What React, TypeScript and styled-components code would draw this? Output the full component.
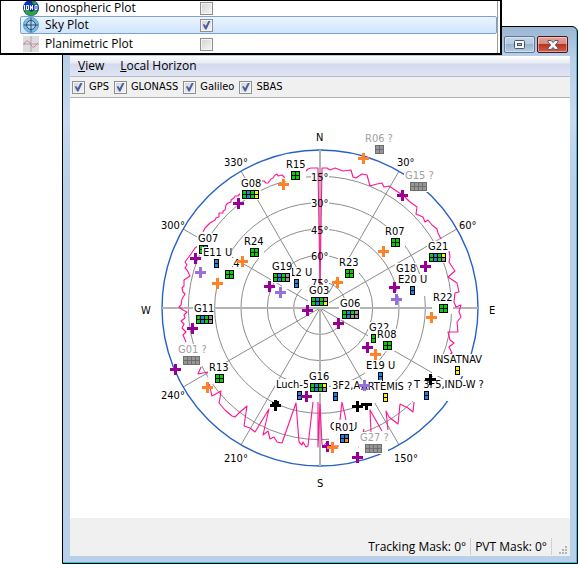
import React from 'react';
import styled, { createGlobalStyle } from 'styled-components';

const UI_FONT = '"Open Sans", "Noto Sans", sans-serif';
const PLOT_FONT = '"DejaVu Sans Condensed", "DejaVu Sans", sans-serif';

const GlobalStyle = createGlobalStyle`
  * { box-sizing: border-box; }
  body { margin: 0; background: #fff; color: #000; font: 12px/18px ${UI_FONT}; }
`;

const Desktop = styled.main`
  position: relative;
  display: flex;
  flex-direction: column;
  min-height: 100vh;
  padding: 26px 1px 1px 62px;
`;

const WindowFrame = styled.section`
  flex: 1;
  display: flex;
  flex-direction: column;
  padding: 0 7px 7px;
  border: 1px solid #000;
  border-radius: 0 6px 0 0;
  background: linear-gradient(#9bb6d2, #b8cfe8 30px, #c6daf0 90px, #b8d0ea 160px, #b8d0ea);
  box-shadow: inset -1px -1px 0 #1ec8e6;
`;

const TitleBar = styled.header`
  display: flex;
  justify-content: flex-end;
  align-items: flex-start;
  gap: 2px;
  height: 29px;
  padding: 9px 2px 0 0;
`;

const CaptionButton = styled.button<{ $danger?: boolean }>`
  display: grid;
  place-items: center;
  width: 31px;
  height: 17px;
  padding: 0;
  border: 1px solid ${p => (p.$danger ? '#4c1420' : '#5f7590')};
  border-radius: 2px;
  background: ${p =>
    p.$danger
      ? 'linear-gradient(#e3a39a, #d98a7e 46%, #b9331f 50%, #d0604a)'
      : 'linear-gradient(#c3d6ea, #b4cae2 46%, #98b3d0 50%, #b5cce5)'};
  box-shadow: inset 0 0 0 1px rgba(255, 255, 255, 0.4);
`;

const MenuBar = styled.nav`
  display: flex;
  height: 21px;
  border-bottom: 1px solid #b6bccb;
  background: linear-gradient(#fff, #e8ebf5 7px, #d4daed 8px, #e0e5f3);
`;

const MenuItem = styled.button`
  padding: 0 8px;
  border: 0;
  background: none;
  color: #000;
  font: 12px/20px ${UI_FONT};
`;

const Toolbar = styled.div`
  display: flex;
  align-items: center;
  gap: 5px;
  height: 21px;
  padding-left: 2px;
  border-bottom: 1px solid #b0b0b0;
  background: #f0f0f0;
`;

const Check = styled.input`
  appearance: none;
  flex: none;
  width: 13px;
  height: 13px;
  margin: 0;
  border: 1px solid #8e8f8f;
  background: linear-gradient(135deg, #cfd2d6, #f6f6f6);
  box-shadow: inset 0 0 0 1px #f4f4f4;

  &:checked::after {
    content: '';
    display: block;
    width: 9px;
    height: 9px;
    margin: 1px;
    background: #4a5f9b;
    clip-path: polygon(8% 48%, 24% 38%, 42% 60%, 74% 0, 96% 0, 50% 100%, 36% 100%);
  }
`;

const FilterLabel = styled.label`
  display: flex;
  align-items: center;
  gap: 4px;
  font: 11px/18px ${PLOT_FONT};
`;

const PlotArea = styled.div`
  flex: 1;
  display: flex;
  justify-content: center;
  background: #fff;
`;

const Chart = styled.svg`
  display: block;
  font: 11px ${PLOT_FONT};
`;

const StatusBar = styled.footer`
  display: flex;
  justify-content: flex-end;
  align-items: flex-end;
  height: 38px;
  padding: 0 2px 1px 0;
  background: #f0f0f0;
`;

const StatusCell = styled.span`
  height: 17px;
  padding: 0 4px;
  border-right: 1px solid #d0d0d0;
  line-height: 18px;
`;

const Grip = styled.svg`
  margin-left: 7px;
`;

const ViewList = styled.ul`
  position: absolute;
  top: 0;
  left: 0;
  right: 77px;
  height: 55px;
  margin: 0;
  padding: 0 1px 0 19px;
  overflow: hidden;
  display: flex;
  flex-direction: column;
  border: solid #000;
  border-width: 1px 2px 2px 1px;
  background: #fff;
  box-shadow: inset -2px 0 0 #fff, inset -3px 0 0 #9a9a9a;
  list-style: none;
`;

const ViewRow = styled.li<{ $selected?: boolean; $clipped?: boolean }>`
  display: flex;
  align-items: center;
  height: 18px;
  flex: none;
  margin: ${p => (p.$clipped ? '-3px' : '0')} 2px 0 0;
  padding: ${p => (p.$selected ? '0' : '2px')} 0 0 2px;
  border: 1px solid ${p => (p.$selected ? '#7da2ce' : 'transparent')};
  border-radius: 2px;
  background: ${p => (p.$selected ? 'linear-gradient(#ebf4fe, #cfe4fe)' : 'none')};
`;

const ViewName = styled.label`
  display: flex;
  align-items: center;
  gap: 6px;
  width: 177px;
`;

const CX = 320;
const CY = 308;
const R = 158;

type Sat = {
  name: string;
  x: number;
  w: number;
  icon: [number, number];
  cells: string;
  muted?: boolean;
};

const FILL: Record<string, string> = {
  g: '#00d200',
  b: '#1e82e6',
  y: '#fff000',
  s: '#969696',
  o: '#ff8228',
};

// Each pair of letters in `cells` is one column: top colour, bottom colour.
const SATS: Sat[] = [
  { name: 'R06 ?', x: 365, w: 28, icon: [375, 145], cells: 'ssss', muted: true },
  { name: 'G15 ?', x: 405, w: 28, icon: [410, 182], cells: 'ssssssss', muted: true },
  { name: 'G01 ?', x: 178, w: 28, icon: [183, 356], cells: 'ssssssss', muted: true },
  { name: 'G27 ?', x: 360, w: 28, icon: [365, 444], cells: 'ssssssss', muted: true },
  { name: 'R15', x: 286, w: 20, icon: [291, 171], cells: 'gggg' },
  { name: 'G08', x: 241, w: 20, icon: [242, 190], cells: 'ggbbggyy' },
  { name: 'G07', x: 198, w: 20, icon: [199, 245], cells: 'ggbb' },
  { name: 'R14', x: 220, w: 20, icon: [225, 270], cells: 'gggg' },
  { name: 'E11 U', x: 203, w: 29, icon: [214, 259], cells: 'bb' },
  { name: 'R24', x: 244, w: 20, icon: [250, 248], cells: 'gggg' },
  { name: 'E12 U', x: 283, w: 29, icon: [294, 279], cells: 'bb' },
  { name: 'G19', x: 272, w: 20, icon: [273, 273], cells: 'ggbbggss' },
  { name: 'R23', x: 339, w: 20, icon: [345, 269], cells: 'gggg' },
  { name: 'G03', x: 309, w: 20, icon: [311, 297], cells: 'ggbbggsy' },
  { name: 'G06', x: 340, w: 20, icon: [342, 310], cells: 'ggbbgsss' },
  { name: 'G11', x: 194, w: 20, icon: [196, 315], cells: 'ggbbggss' },
  { name: 'R07', x: 385, w: 20, icon: [391, 238], cells: 'gggg' },
  { name: 'G21', x: 428, w: 20, icon: [429, 253], cells: 'ggbbggys' },
  { name: 'G18', x: 396, w: 20, icon: [398, 275], cells: 'ggbb' },
  { name: 'E20 U', x: 398, w: 29, icon: [410, 286], cells: 'bb' },
  { name: 'R22', x: 433, w: 20, icon: [439, 304], cells: 'gggg' },
  { name: 'G22', x: 369, w: 20, icon: [371, 334], cells: 'ggbb' },
  { name: 'R08', x: 377, w: 20, icon: [383, 341], cells: 'gggg' },
  { name: 'R13', x: 209, w: 20, icon: [215, 374], cells: 'gggg' },
  { name: 'E19 U', x: 366, w: 29, icon: [378, 372], cells: 'bb' },
  { name: 'Luch-5A', x: 276, w: 40, icon: [297, 391], cells: 'bb' },
  { name: '3F2,AOR', x: 332, w: 50, icon: [333, 392], cells: 'bb' },
  { name: 'G16', x: 309, w: 20, icon: [310, 383], cells: 'ggbbggys' },
  { name: 'T 3F5,IND-W ?', x: 414, w: 72, icon: [424, 391], cells: 'bb' },
  { name: 'ARTEMIS ?', x: 361, w: 51, icon: [383, 393], cells: 'yy' },
  { name: 'INSATNAV', x: 433, w: 50, icon: [455, 366], cells: 'yy' },
  { name: 'G', x: 330, w: 10, icon: [340, 433], cells: 'bb' },
  { name: 'U', x: 350, w: 9, icon: [341, 433], cells: 'bb' },
  { name: 'R01', x: 335, w: 19, icon: [340, 434], cells: 'bbbo' },
];

const CROSSES: Record<string, [number, number][]> = {
  '#960096': [
    [238, 203], [195, 258], [269, 286], [307, 310], [192, 328], [402, 195], [425, 266],
    [394, 287], [338, 323], [367, 347], [175, 369], [306, 396], [327, 446], [357, 457],
  ],
  '#ff8228': [
    [363, 158], [283, 184], [383, 251], [337, 282], [242, 261], [217, 283], [431, 317],
    [375, 354], [207, 387], [332, 447],
  ],
  '#9670dc': [[200, 272], [280, 292], [396, 299], [364, 385]],
  '#000': [[275, 405], [430, 379], [357, 406]],
};

const HORIZON = [
  '203,232 205,228 208,225 210,223 215,220 216,218 219,217 219,213 223,213 223,211 225,210 226,205 228,203 231,202 231,200 234,198 235,196 238,196 241,193',
  '262,181 264,181 266,183 268,183 271,179 273,178 275,175 277,174 278,176 282,175 284,177 286,178',
  '306,171 308,169 311,168 318,168 320,284 322,168 327,168 330,170 335,168 343,171 351,170 353,177 356,178 362,174 367,175 370,186 377,184 382,183 384,187 389,186 392,188 398,192 403,195 410,202 417,207 416,214 423,217 425,222 428,220 432,225 437,229 438,233 441,239',
  '198,246 195,248 191,254 188,258 185,262 187,265 185,268 187,270 190,276 187,278 184,280 184,286 182,288 183,292 185,294 182,299 181,305 179,307 183,310 187,312 184,315 185,318 181,321 184,324 182,328 186,332 183,335 186,342',
  '201,367 198,374 208,372 209,377 209,382 211,392 212,396 221,391 220,398 219,403 225,410 232,416 235,417 240,412 247,406 244,426 250,428 255,432 269,409 263,435 268,431 270,439 274,437 277,442 282,443 296,403 299,442 302,445 303,442 306,447 308,446 313,402',
  '318,402 318,447 320,404 322,444 323,447 326,443 328,446 339,446',
  '340,420 342,402 346,420',
  '359,448 364,429',
  '371,432 370,410 382,431',
  '388,430 386,411 389,417 398,424 400,404 408,408 413,412 414,402',
  '449,251 450,257 449,262 455,271 448,277 457,283 459,292 455,293 454,302 456,307 461,305 459,312 461,317 457,322 458,332 448,332 450,340 454,343 449,347 452,353 449,356 452,352',
];

const SPOKES = [30, 60, 120, 150, 210, 240, 300, 330].map(deg => (deg * Math.PI) / 180);
const RINGS = [15, 30, 45, 60, 75];
const BEARINGS: [string, number, number][] = [
  ['N', 316, 141], ['30°', 397, 166], ['60°', 459, 229], ['E', 489, 314],
  ['150°', 394, 462], ['S', 317, 487], ['210°', 224, 462], ['240°', 161, 399],
  ['W', 141, 314], ['300°', 161, 229], ['330°', 224, 166],
];

function Satellite({ name, x, w, icon: [ix, iy], cells, muted }: Sat) {
  const line = muted ? '#6e6e6e' : '#000';
  const columns = cells.length / 2;
  return (
    <g>
      <rect x={x - 1} y={iy - 12} width={w + 1} height={22} fill="#fff" />
      <text x={x} y={iy - 3} fill={muted ? '#a0a0a0' : '#000'}>{name}</text>
      <rect x={ix} y={iy} width={columns * 4 + 1} height={9} fill={line} />
      {cells.split('').map((c, i) => (
        <rect
          key={i}
          x={ix + 1 + Math.floor(i / 2) * 4}
          y={iy + 1 + (i % 2) * 4}
          width={3}
          height={3}
          fill={FILL[c]}
        />
      ))}
    </g>
  );
}

function SkyPlot() {
  return (
    <Chart width="500" height="420" viewBox="70 98 500 420" role="img" aria-label="Sky plot">
      <g fill="none" stroke="#8c8c8c">
        {RINGS.map(el => <circle key={el} cx={CX} cy={CY} r={(R * (90 - el)) / 90} />)}
        {SPOKES.map(a => (
          <line key={a} x1={CX} y1={CY} x2={CX + R * Math.sin(a)} y2={CY - R * Math.cos(a)} />
        ))}
        <circle cx={CX} cy={CY} r={R} stroke="#2860c8" strokeWidth="1.4" />
      </g>
      {RINGS.map((el, i) => (
        <rect key={el} x={311} y={Math.round(172 + i * 26.4)} width={18} height={11} fill="#fff" />
      ))}
      <path d={`M${CX} 150V466M162 ${CY}H478`} stroke="#b4b4b4" strokeWidth="2" />
      <g fill="none" stroke="#ff1493" strokeWidth="1.1" strokeLinejoin="round">
        {HORIZON.map(points => <polyline key={points} points={points} />)}
      </g>
      {RINGS.map((el, i) => (
        <text key={el} x={311} y={Math.round(181 + i * 26.4)}>{el}°</text>
      ))}
      {BEARINGS.map(([name, x, y]) => <text key={name} x={x} y={y}>{name}</text>)}
      {SATS.map(sat => <Satellite key={sat.name} {...sat} />)}
      {Object.entries(CROSSES).map(([color, spots]) => (
        <path
          key={color}
          fill={color}
          d={spots.map(([x, y]) => `M${x - 1} ${y - 5}h3v4h4v3h-4v4h-3v-4h-4v-3h4z`).join('')}
        />
      ))}
      <path d="M361 403h11v3h-4v4h-3v-4h-4zM272 402h4v-1h3v3h-7z" />
    </Chart>
  );
}

const IonoIcon = () => (
  <svg width="16" height="16" viewBox="0 0 16 16" aria-hidden="true">
    <circle cx="8" cy="8" r="8" fill="#0a32b4" />
    <path d="M1 10l4-1 3 3 4-2 3 1-3 4-4 1-5-2zM9 1l4 1 1 3-4-1z" fill="#32a03c" />
    <path d="M1.5 5v5M3.5 5.500h2v4h-2zM7.5 10V5.500l2 4V5M12 5.500h2v4h-2z" fill="none" stroke="#fff" />
  </svg>
);

const SkyIcon = () => (
  <svg width="16" height="16" viewBox="0 0 16 16" aria-hidden="true">
    <circle cx="8" cy="8" r="7.500" fill="#7dbee6" stroke="#5a9bcd" />
    <circle cx="8" cy="8" r="4.500" fill="#aad7f0" stroke="#2d4b69" />
    <path d="M8 1v14M1 8h14" stroke="#2d4b69" />
  </svg>
);

const PlanimetricIcon = () => (
  <svg width="16" height="16" viewBox="0 0 16 16" aria-hidden="true">
    <path d="M0 0h16v16H0z" fill="#dcdce1" />
    <path d="M8 0v16M0 8h16" stroke="#a5a5af" />
    <path d="M1 9c1-4 3-5 5-3s3 6 5 5 2-3 4-4" fill="none" stroke="#e67882" />
  </svg>
);

const VIEWS = [
  { id: 'iono', name: 'Ionospheric Plot', icon: <IonoIcon />, on: false },
  { id: 'sky', name: 'Sky Plot', icon: <SkyIcon />, on: true },
  { id: 'plan', name: 'Planimetric Plot', icon: <PlanimetricIcon />, on: false },
];

export default function App() {
  return (
    <Desktop>
      <GlobalStyle />
      <WindowFrame aria-label="Sky Plot">
        <TitleBar>
          <CaptionButton aria-label="Maximize">
            <svg width="11" height="9" viewBox="0 0 11 9">
              <rect x="0.500" y="0.500" width="10" height="8" rx="1" fill="#f5f5f5" stroke="#4b5564" />
              <rect x="3.500" y="3.500" width="4" height="2" fill="#a5bedc" stroke="#4b5564" />
            </svg>
          </CaptionButton>
          <CaptionButton $danger aria-label="Close">
            <svg width="12" height="10" viewBox="0 0 12 10">
              <path
                d="M1 .5h3l2 2 2-2h3v1.500L8.300 5 11 8v1.500H8l-2-2-2 2H1V8l2.700-3L1 2z"
                fill="#f5f5f5"
                stroke="#555a69"
              />
            </svg>
          </CaptionButton>
        </TitleBar>
        <MenuBar>
          <MenuItem><u>V</u>iew</MenuItem>
          <MenuItem><u>L</u>ocal Horizon</MenuItem>
        </MenuBar>
        <Toolbar>
          {['GPS', 'GLONASS', 'Galileo', 'SBAS'].map(name => (
            <FilterLabel key={name}>
              <Check type="checkbox" defaultChecked />
              {name}
            </FilterLabel>
          ))}
        </Toolbar>
        <PlotArea><SkyPlot /></PlotArea>
        <StatusBar>
          <StatusCell>Tracking Mask: 0°</StatusCell>
          <StatusCell>PVT Mask: 0°</StatusCell>
          <Grip width="9" height="9" viewBox="0 0 9 9" fill="#b4b4b4" aria-hidden="true">
            <path d="M6 0h2v2H6zM3 3h2v2H3zM6 3h2v2H6zM0 6h2v2H0zM3 6h2v2H3zM6 6h2v2H6z" />
          </Grip>
        </StatusBar>
      </WindowFrame>
      <ViewList>
        {VIEWS.map(({ id, name, icon, on }, i) => (
          <ViewRow key={id} $selected={on} $clipped={i === 0}>
            <ViewName htmlFor={id}>{icon}{name}</ViewName>
            <Check id={id} type="checkbox" defaultChecked={on} />
          </ViewRow>
        ))}
      </ViewList>
    </Desktop>
  );
}
